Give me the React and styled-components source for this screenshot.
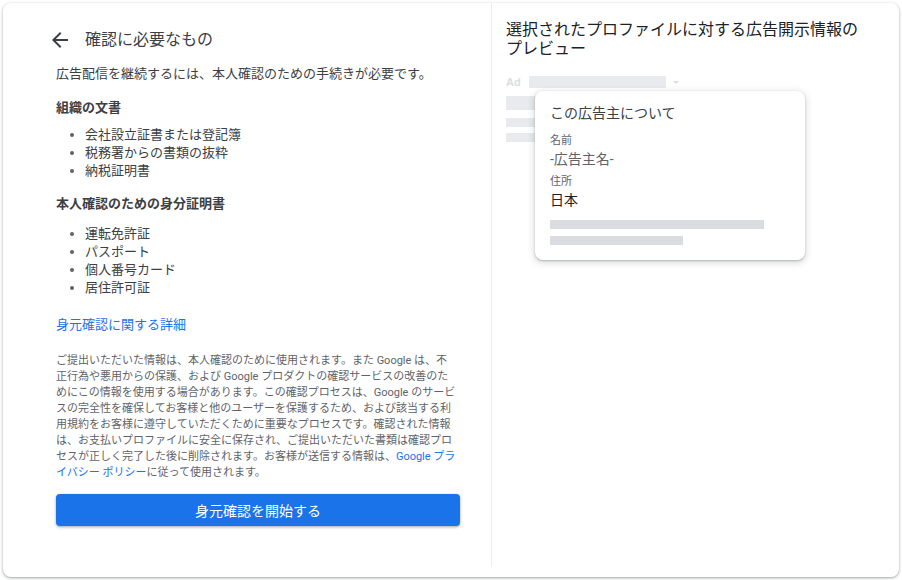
import React from "react";
import styled, { createGlobalStyle } from "styled-components";

const Global = createGlobalStyle`
  html, body { margin: 0; padding: 0; background: #ffffff; }
  body { font-family: Roboto, "Noto Sans CJK JP", "Noto Sans", sans-serif; color: #3c4043; }
  * { box-sizing: border-box; }
`;

const Page = styled.div`
  width: 902px;
  height: 580px;
  padding: 3px;
`;

const Card = styled.div`
  width: 896px;
  height: 574px;
  background: #fff;
  border-radius: 8px;
  box-shadow: 0 1px 2px rgba(60, 64, 67, 0.3), 0 1px 3px 1px rgba(60, 64, 67, 0.15);
  display: flex;
  align-items: flex-start;
  padding-bottom: 10px;
`;

const LeftCol = styled.section`
  width: 489px;
  align-self: stretch;
  border-right: 1px solid #ececec;
  padding: 25px 31px 0 53px;
`;

const RightCol = styled.section`
  flex: 1;
  padding: 17px 24px 0 14px;
`;

const Header = styled.div`
  display: flex;
  align-items: center;
  height: 24px;
  margin-left: -8px;
  gap: 13px;
`;

const Title = styled.h1`
  margin: 0;
  font-size: 16px;
  font-weight: 400;
  color: #3c4043;
  line-height: 24px;
`;

const Lead = styled.p`
  margin: 12px 0 0;
  font-size: 13px;
  line-height: 20px;
  color: #3c4043;
`;

const SubHead = styled.h2`
  margin: ${(p) => p.$mt}px 0 0;
  font-size: 13px;
  line-height: 20px;
  font-weight: 700;
  color: #3c4043;
`;

const List = styled.ul`
  list-style: none;
  margin: ${(p) => p.$mt}px 0 0;
  padding: 0;
`;

const Item = styled.li`
  display: flex;
  align-items: center;
  font-size: 13px;
  line-height: 18px;
  color: #3c4043;
`;

const Dot = styled.span`
  width: 4px;
  height: 4px;
  border-radius: 50%;
  background: #5f6368;
  margin: 0 11px 0 14px;
  flex: none;
`;

const DetailLink = styled.a`
  display: block;
  margin-top: 18px;
  font-size: 13px;
  line-height: 20px;
  color: #1a73e8;
  text-decoration: none;
`;

const Fine = styled.p`
  margin: 18px 0 0;
  font-size: 11px;
  line-height: 16px;
  color: #5f6368;
  white-space: nowrap;
`;

const InlineLink = styled.a`
  color: #1a73e8;
  text-decoration: none;
`;

const PrimaryButton = styled.button`
  display: block;
  width: 404px;
  height: 32px;
  margin-top: 13px;
  border: none;
  border-radius: 4px;
  background: #1a73e8;
  color: #fff;
  font-family: inherit;
  font-size: 14px;
  line-height: 32px;
  box-shadow: 0 1px 2px rgba(60, 64, 67, 0.3), 0 1px 3px 1px rgba(60, 64, 67, 0.15);
  cursor: pointer;
`;

const PreviewTitle = styled.h2`
  margin: 0;
  font-size: 16px;
  font-weight: 400;
  line-height: 19px;
  color: #202124;
`;

const Preview = styled.div`
  position: relative;
  margin-top: 18px;
`;

const AdRow = styled.div`
  display: flex;
  align-items: center;
  height: 12px;
`;

const AdLabel = styled.span`
  font-family: "Liberation Sans", Arial, sans-serif;
  font-size: 11px;
  font-weight: 700;
  color: #dadce0;
  width: 23px;
`;

const Bar = styled.div`
  width: ${(p) => p.$w}px;
  height: ${(p) => p.$h}px;
  background: ${(p) => p.$c || "#e8eaed"};
  margin-top: ${(p) => p.$mt || 0}px;
`;

const Caret = styled.span`
  margin-left: 7px;
  width: 0;
  height: 0;
  border-left: 3px solid transparent;
  border-right: 3px solid transparent;
  border-top: 3px solid #dadce0;
`;

const InfoCard = styled.div`
  position: absolute;
  left: 29px;
  top: 15px;
  width: 270px;
  background: #fff;
  border-radius: 8px;
  box-shadow: 0 1px 2px rgba(60, 64, 67, 0.3), 0 2px 6px 2px rgba(60, 64, 67, 0.15);
  padding: 12px 15px 15px 15px;
`;

const InfoTitle = styled.div`
  font-size: 14px;
  line-height: 20px;
  color: #3c4043;
`;

const FieldLabel = styled.div`
  font-size: 11px;
  line-height: 16px;
  color: #5f6368;
  margin-top: ${(p) => p.$mt}px;
`;

const FieldValue = styled.div`
  font-size: 14px;
  line-height: 20px;
  color: ${(p) => (p.$muted ? "#5f6368" : "#202124")};
`;

const BackIcon = () => (
  <svg width="24" height="24" viewBox="0 0 24 24" fill="#3c4043">
    <path d="M20 11H7.83l5.59-5.59L12 4l-8 8 8 8 1.41-1.41L7.83 13H20v-2z" />
  </svg>
);

const orgDocs = ["会社設立証書または登記簿", "税務署からの書類の抜粋", "納税証明書"];
const idDocs = ["運転免許証", "パスポート", "個人番号カード", "居住許可証"];

export default function App() {
  return (
    <>
      <Global />
      <Page>
        <Card>
          <LeftCol>
            <Header>
              <BackIcon />
              <Title>確認に必要なもの</Title>
            </Header>
            <Lead>広告配信を継続するには、本人確認のための手続きが必要です。</Lead>
            <SubHead $mt={14}>組織の文書</SubHead>
            <List $mt={8}>
              {orgDocs.map((d) => (
                <Item key={d}>
                  <Dot />
                  {d}
                </Item>
              ))}
            </List>
            <SubHead $mt={14}>本人確認のための身分証明書</SubHead>
            <List $mt={11}>
              {idDocs.map((d) => (
                <Item key={d}>
                  <Dot />
                  {d}
                </Item>
              ))}
            </List>
            <DetailLink href="#">身元確認に関する詳細</DetailLink>
            <Fine>
              ご提出いただいた情報は、本人確認のために使用されます。また Google は、不
              <br />
              正行為や悪用からの保護、および Google プロダクトの確認サービスの改善のた
              <br />
              めにこの情報を使用する場合があります。この確認プロセスは、Google のサービ
              <br />
              スの完全性を確保してお客様と他のユーザーを保護するため、および該当する利
              <br />
              用規約をお客様に遵守していただくために重要なプロセスです。確認された情報
              <br />
              は、お支払いプロファイルに安全に保存され、ご提出いただいた書類は確認プロ
              <br />
              セスが正しく完了した後に削除されます。お客様が送信する情報は、
              <InlineLink href="#">Google プラ</InlineLink>
              <br />
              <InlineLink href="#">イバシー ポリシー</InlineLink>に従って使用されます。
            </Fine>
            <PrimaryButton>身元確認を開始する</PrimaryButton>
          </LeftCol>
          <RightCol>
            <PreviewTitle>
              選択されたプロファイルに対する広告開示情報の
              <br />
              プレビュー
            </PreviewTitle>
            <Preview>
              <AdRow>
                <AdLabel>Ad</AdLabel>
                <Bar $w={137} $h={12} />
                <Caret />
              </AdRow>
              <Bar $w={220} $h={14} $mt={8} />
              <Bar $w={160} $h={9} $mt={8} />
              <Bar $w={200} $h={9} $mt={6} />
              <InfoCard>
                <InfoTitle>この広告主について</InfoTitle>
                <FieldLabel $mt={10}>名前</FieldLabel>
                <FieldValue $muted>-広告主名-</FieldValue>
                <FieldLabel $mt={5}>住所</FieldLabel>
                <FieldValue>日本</FieldValue>
                <Bar $w={214} $h={9} $mt={10} $c="#dadce0" />
                <Bar $w={133} $h={9} $mt={7} $c="#dadce0" />
              </InfoCard>
            </Preview>
          </RightCol>
        </Card>
      </Page>
    </>
  );
}
